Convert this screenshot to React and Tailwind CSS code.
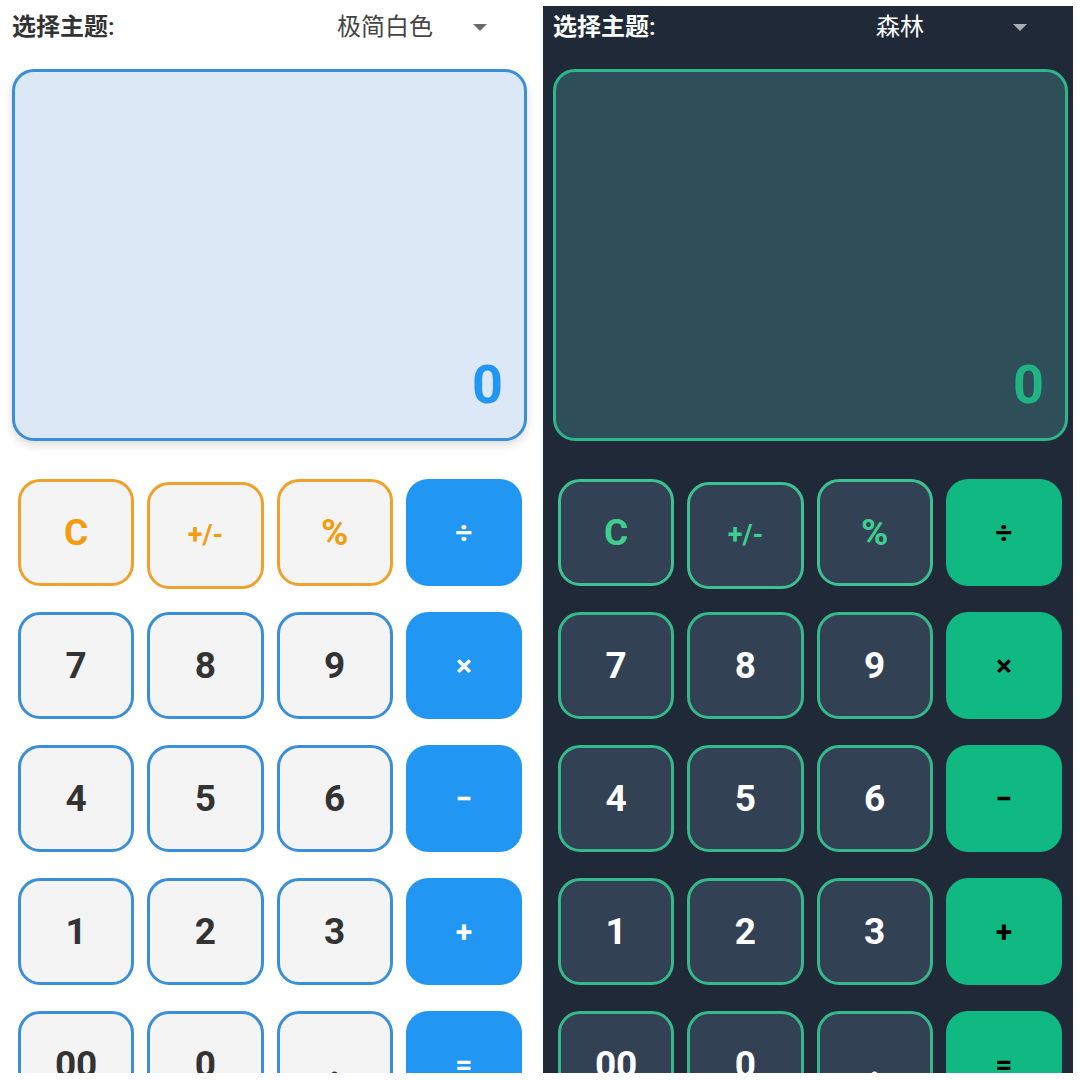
import React from 'react';

const keys = [
  ['C', 'fn'], ['+/-', 'fn'], ['%', 'fn'], ['÷', 'op'],
  ['7', 'num'], ['8', 'num'], ['9', 'num'], ['×', 'op'],
  ['4', 'num'], ['5', 'num'], ['6', 'num'], ['−', 'op'],
  ['1', 'num'], ['2', 'num'], ['3', 'num'], ['+', 'op'],
  ['00', 'num'], ['0', 'num'], ['.', 'num'], ['=', 'op'],
];

const themes = {
  light: {
    panel: 'bg-white w-[540px] h-[1073px]',
    header: 'h-[54px] pl-[12px]',
    label: 'text-[#333333]',
    value: 'text-[#444444]',
    dropdown: 'mr-[53px] w-[150px]',
    arrow: 'border-t-[#6b6b6b]',
    display: 'mt-[15px] mx-[12px] mr-[13px] bg-[#dce8f5] border-[#3a8fd8] shadow-[0_4px_10px_rgba(0,0,0,0.14)]',
    zero: 'text-[#2196f3]',
    grid: 'mx-[18px]',
    fn: 'bg-[#f4f4f4] border-[3px] border-[#f0a12c] text-[#f39c12]',
    num: 'bg-[#f4f4f4] border-[3px] border-[#3a8fd8] text-[#333333]',
    op: 'bg-[#2196f3] text-white',
  },
  forest: {
    panel: 'bg-[#1f2937] w-[530px] h-[1067px] mt-[6px]',
    header: 'h-[42px] pl-[10px]',
    label: 'text-white',
    value: 'text-white',
    dropdown: 'mr-[46px] w-[151px]',
    arrow: 'border-t-[#a9adb3]',
    display: 'mt-[21px] mx-[10px] mr-[5px] bg-[#2e4f5a] border-[#2db68a]',
    zero: 'text-[#20b482]',
    grid: 'ml-[15px] mr-[11px]',
    fn: 'bg-[#334155] border-[3px] border-[#3cc291] text-[#3ecf8e]',
    num: 'bg-[#334155] border-[3px] border-[#36b98a] text-white',
    op: 'bg-[#10b981] text-black',
  },
};

const sizeFor = (label, kind) => {
  if (label === '+/-') return 'text-[27px]';
  if (kind === 'op') return 'text-[30px]';
  return 'text-[37px]';
};

const Calculator = ({ theme, themeName }) => {
  const t = themes[theme];
  return (
    <div className={`${t.panel} flex flex-col overflow-hidden shrink-0`}>
      <div className={`${t.header} flex items-center shrink-0`}>
        <span className={`${t.label} text-[24px] font-semibold leading-none`}>选择主题:</span>
        <div className={`${t.dropdown} ml-auto flex items-center justify-between`}>
          <span className={`${t.value} text-[24px] leading-none`}>{themeName}</span>
          <span className={`${t.arrow} w-0 h-0 border-l-[7px] border-r-[7px] border-t-[7px] border-l-transparent border-r-transparent`} />
        </div>
      </div>

      <div className={`${t.display} h-[372px] shrink-0 rounded-[22px] border-[3px] flex items-end justify-end pr-[21px] pb-[26px]`}>
        <span className={`${t.zero} text-[54px] font-bold leading-none`}>0</span>
      </div>

      <div className={`${t.grid} mt-[38px] grid grid-cols-4 gap-x-[13px] gap-y-[26px] auto-rows-[107px]`}>
        {keys.map(([label, kind]) => (
          <button
            key={label}
            type="button"
            className={`${t[kind]} ${sizeFor(label, kind)} ${label === '+/-' ? 'translate-y-[3px]' : ''} rounded-[22px] font-bold flex items-center justify-center leading-none`}
          >
            {label}
          </button>
        ))}
      </div>
    </div>
  );
};

export default function App() {
  return (
    <div className="w-[1080px] h-[1080px] bg-white flex overflow-hidden" style={{ fontFamily: 'Roboto, "Noto Sans CJK SC", sans-serif' }}>
      <Calculator theme="light" themeName="极简白色" />
      <div className="w-[3px] shrink-0" />
      <Calculator theme="forest" themeName="森林" />
    </div>
  );
}
